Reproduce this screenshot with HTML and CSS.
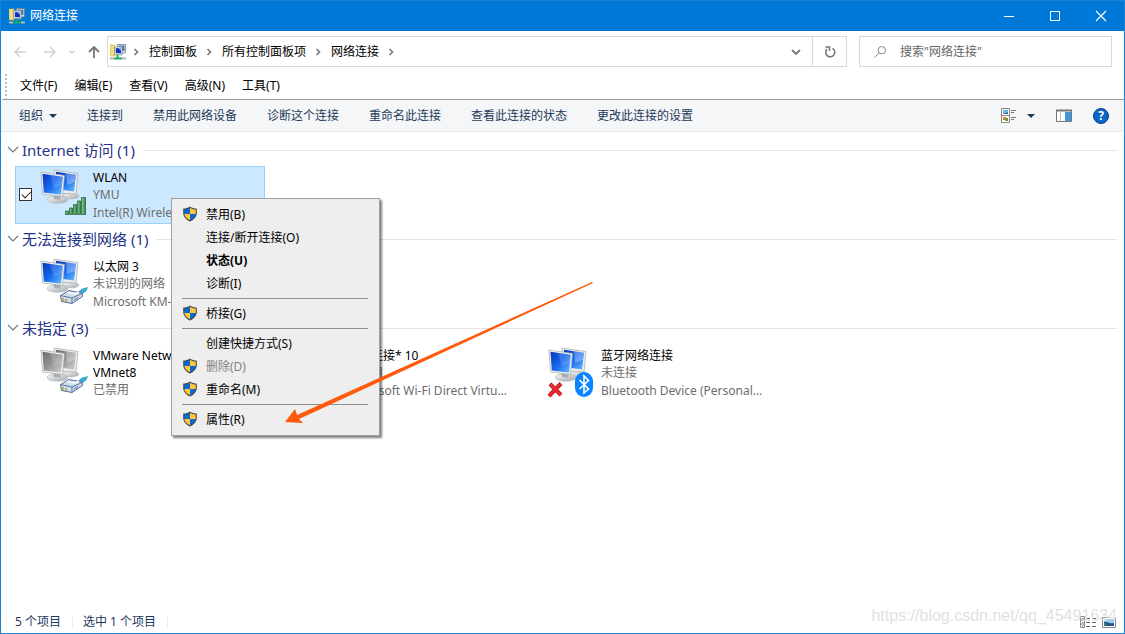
FILE: index.html
```html
<!DOCTYPE html>
<html lang="zh-CN">
<head>
<meta charset="utf-8">
<title>网络连接</title>
<link rel="stylesheet" href="styles.css">
</head>
<body>
<svg class="defs" aria-hidden="true">
  <defs>
    <linearGradient id="blue" x1="0" y1="0" x2="1" y2="1"><stop offset="0" stop-color="#0836b8"/><stop offset=".5" stop-color="#1668ee"/><stop offset="1" stop-color="#6cc0ff"/></linearGradient>
    <linearGradient id="grey" x1="0" y1="0" x2="1" y2="1"><stop offset="0" stop-color="#6b6b6b"/><stop offset=".5" stop-color="#969696"/><stop offset="1" stop-color="#d4d4d4"/></linearGradient>
    <linearGradient id="stand" x1="0" y1="0" x2="1" y2="1"><stop offset="0" stop-color="#fafafa"/><stop offset="1" stop-color="#a4a8ac"/></linearGradient>
    <linearGradient id="green" x1="0" y1="0" x2="1" y2="0"><stop offset="0" stop-color="#8fcf9c"/><stop offset="1" stop-color="#2f8049"/></linearGradient>
    <symbol id="screens" viewBox="0 0 50 52">
      <ellipse cx="31" cy="28" rx="8" ry="3" fill="url(#stand)" stroke="#bbb" stroke-width=".5"/>
      <path d="M14 2 38 5.500 36 26 15 25Z" fill="#ececec" stroke="#a5a9ad" stroke-width=".7"/>
      <path d="M16 3.800 36 6.800 34 23.500 16 21Z" fill="var(--screen)"/>
      <path d="M26 5.300 36 6.800 35 14 27 17Z" fill="#fff" opacity=".3"/>
      <ellipse cx="17.500" cy="31.500" rx="10.500" ry="3.800" fill="url(#stand)" stroke="#b4b8bc" stroke-width=".6"/>
      <path d="M13 26 21 27.500 20 31.500 14 31Z" fill="#a9adb2"/>
      <path d="M1 4 24.500 7.500 22.500 28.500 2.500 26Z" fill="#f3f3f3" stroke="#a5a9ad" stroke-width=".7"/>
      <path d="M2.500 5.700 22.800 8.800 21 26.800 3.800 24.500Z" fill="var(--screen)"/>
      <path d="M10 6.900 22.800 8.800 22 17 14 20Z" fill="#fff" opacity=".16"/>
    </symbol>
    <symbol id="cable" viewBox="0 0 50 52">
      <path d="M37 36 42 32 47.500 30.500 46 34 41 38Z" fill="#35a9d8" stroke="#2388b4" stroke-width=".5"/>
      <path d="M20.500 38.500 29 33.500 42 36 42.500 39.500 32 46.500 21.500 44.500Z" fill="#cfdcec" stroke="#566f9b"/>
      <path d="M20.500 38.500 32 41 42 36.500M32 41V46.500" fill="none" stroke="#5d759f"/>
      <path d="M27 35.500 35 37 39 34.800" fill="none" stroke="#f8fbff" stroke-width="1.500"/>
      <path d="M23 41V44M26 42V45" stroke="#b5a537" stroke-width="1.500"/><path d="M34 42V44L38 42V39.500Z" fill="#8ca3c4"/>
    </symbol>
    <symbol id="shield" viewBox="0 0 16 16">
      <path d="M8 .5C6 2 3.500 2.500 1.200 2.500V7.500C1.500 11 4.500 14 8 15.600 11.500 14 14.500 11 14.800 7.500V2.500C12.500 2.500 10 2 8 .5Z" fill="#454b52"/>
      <path d="M8 1.800V8H2.300V3.600C4.500 3.500 6.500 2.900 8 1.800Z" fill="#0b68d0"/><path d="M8 1.800V8H13.700V3.600C11.500 3.500 9.500 2.900 8 1.800Z" fill="#ffc83b"/>
      <path d="M2.300 8H8V14.300C5 12.900 2.700 10.800 2.300 8Z" fill="#ffc83b"/><path d="M13.700 8H8V14.300C11 12.900 13.300 10.800 13.700 8Z" fill="#0b68d0"/>
    </symbol>
    <symbol id="network" viewBox="0 0 16 16">
      <path d="M0 1H5V12H0Z" fill="#f4dd7a" stroke="#cfaf48" stroke-width=".6"/>
      <path d="M7 .5H15.500V8.500L12 9.500Z" fill="#dce3ea" stroke="#687684" stroke-width=".7"/><path d="M9 1.500H14.500V7H9Z" fill="#547bb0"/>
      <path d="M4.500 3 12 2.500V11L4.500 10.500Z" fill="#eceff2" stroke="#78838d" stroke-width=".7"/><path d="M5.800 4.200 11 3.800V9.500L5.800 9Z" fill="#1235b8"/><path d="M8 4 11 3.800V7Z" fill="#7da8ec"/>
      <path d="M7.500 10.500V14M4 14.500H12" stroke="#1cab62" stroke-width="2"/><path d="M0 14.500H4M12 14.500H16" stroke="#aeb8c0" stroke-width="2"/>
    </symbol>
    <symbol id="crumb" viewBox="0 0 6 8"><path d="M1.500 1 4.500 4 1.500 7" fill="none" stroke="#777" stroke-width="1.600"/></symbol>
    <symbol id="fold" viewBox="0 0 12 8"><path d="M1 1 6 6 11 1" fill="none" stroke="#777" stroke-width="1.200"/></symbol>
  </defs>
</svg>
<div class="window">
  <header class="titlebar">
    <svg class="i16"><use href="#network"/></svg>
    <h1 class="title">网络连接</h1>
    <button class="winbtn" aria-label="最小化"><svg class="i10" viewBox="0 0 10 10"><path d="M0 5.500H10" stroke="#fff"/></svg></button>
    <button class="winbtn" aria-label="最大化"><svg class="i10" viewBox="0 0 10 10"><path d="M.5 .5H9.500V9.500H.5Z" fill="none" stroke="#fff"/></svg></button>
    <button class="winbtn" aria-label="关闭"><svg class="i10" viewBox="0 0 10 10"><path d="M0 0 10 10M10 0 0 10" stroke="#fff" stroke-width="1.200"/></svg></button>
  </header>

  <div class="navbar">
    <div class="navbuttons">
      <button class="plain" aria-label="后退"><svg class="i12" viewBox="0 0 12 12"><path d="M12 6H1M6 1 1 6 6 11" fill="none" stroke="#d2d2d2" stroke-width="1.500"/></svg></button>
      <button class="plain" aria-label="前进"><svg class="i12" viewBox="0 0 12 12"><path d="M0 6H11M6 1 11 6 6 11" fill="none" stroke="#d2d2d2" stroke-width="1.500"/></svg></button>
      <button class="plain recent" aria-label="最近位置"><svg class="i6" viewBox="0 0 6 6"><path d="M.5 1.500 3 4 5.500 1.500" fill="none" stroke="#d0d0d0" stroke-width="1.400"/></svg></button>
      <button class="plain" aria-label="上移"><svg class="i12" viewBox="0 0 12 12"><path d="M6 12V1M1 6 6 1 11 6" fill="none" stroke="#777" stroke-width="1.800"/></svg></button>
    </div>
    <nav class="address" aria-label="地址">
      <svg class="i16"><use href="#network"/></svg>
      <svg class="crumb"><use href="#crumb"/></svg><a href="#">控制面板</a>
      <svg class="crumb"><use href="#crumb"/></svg><a href="#">所有控制面板项</a>
      <svg class="crumb"><use href="#crumb"/></svg><a href="#">网络连接</a>
      <svg class="crumb"><use href="#crumb"/></svg>
      <button class="plain history" aria-label="历史记录"><svg class="i10" viewBox="0 0 10 10"><path d="M1 3 5 7 9 3" fill="none" stroke="#777" stroke-width="1.800"/></svg></button>
      <button class="plain refresh" aria-label="刷新"><svg class="i12" viewBox="0 0 12 12"><path d="M8.500 2.400A4.500 4.500 0 1 1 3 3.200" fill="none" stroke="#777" stroke-width="1.600"/><path d="M1.500 1H5.500V5" fill="none" stroke="#777" stroke-width="1.500"/></svg></button>
    </nav>
    <label class="search">
      <svg class="i12" viewBox="0 0 12 12"><circle cx="7.800" cy="4.200" r="3.700" fill="none" stroke="#888"/><path d="M5.200 6.800 .5 11.500" stroke="#888"/></svg>
      <input type="search" aria-label="搜索" placeholder="搜索&quot;网络连接&quot;">
    </label>
  </div>

  <div class="menubar" role="menubar">
    <button class="plain">文件(F)</button><button class="plain">编辑(E)</button><button class="plain">查看(V)</button><button class="plain">高级(N)</button><button class="plain">工具(T)</button>
  </div>

  <div class="toolbar">
    <button class="plain organize">组织 <svg class="caret" viewBox="0 0 8 4"><path d="M0 0H8L4 4Z" fill="#1e3955"/></svg></button>
    <button class="plain">连接到</button><button class="plain">禁用此网络设备</button><button class="plain">诊断这个连接</button><button class="plain">重命名此连接</button><button class="plain">查看此连接的状态</button><button class="plain">更改此连接的设置</button>
    <div class="views">
      <button class="plain viewmode" aria-label="更改视图">
        <svg class="i16" viewBox="0 0 16 16"><path d="M.5 .5H8.500V14.500H.5ZM.5 7.500H8.500" fill="#fff" stroke="#888"/><path d="M2 2H7V4L2 6Z" fill="#6db6e8"/><path d="M2 6 7 4V6Z" fill="#2c5a94"/><path d="M2 9H5V12H2Z" fill="#e08236"/><path d="M5 10H7V13H4Z" fill="#4f9e38"/><path d="M10 2.500H15M10 4.500H13M10 9.500H15M10 11.500H13" stroke="#777"/></svg>
        <svg class="caret" viewBox="0 0 8 4"><path d="M0 0H8L4 4Z" fill="#1e3955"/></svg>
      </button>
      <button class="plain" aria-label="预览窗格"><svg class="i16" viewBox="0 0 16 16"><path d="M.5 2.500H15.500V13.500H.5Z" fill="#fff" stroke="#777"/><path d="M0 2.500H16" stroke="#777" stroke-width="2"/><path d="M4.500 3V13" stroke="#bbb"/><path d="M9 4H15V13H9Z" fill="#3d95e0"/></svg></button>
      <button class="plain help" aria-label="帮助">?</button>
    </div>
  </div>

  <main class="content">
    <section class="group">
      <h2 class="heading"><svg class="fold"><use href="#fold"/></svg>Internet 访问 (1)</h2>
      <div class="tiles">
        <article class="tile selected">
          <input class="check" type="checkbox" checked aria-label="选择 WLAN">
          <svg class="device" viewBox="0 0 50 52"><use href="#screens"/><g fill="url(#green)" stroke="#27683b" stroke-width=".8"><path d="M25.500 43H28.500V46.500H25.500Z"/><path d="M29.500 40H32.500V46.500H29.500Z"/><path d="M33.500 36.500H36.500V46.500H33.500Z"/><path d="M37.500 33H40.500V46.500H37.500Z"/><path d="M41.500 29.500H45.500V46.500H41.500Z"/></g></svg>
          <div class="info"><h3>WLAN</h3><p>YMU</p><p>Intel(R) Wireless-AC 9560 160MHz</p></div>
        </article>
      </div>
    </section>
    <section class="group">
      <h2 class="heading"><svg class="fold"><use href="#fold"/></svg>无法连接到网络 (1)</h2>
      <div class="tiles">
        <article class="tile">
          <svg class="device" viewBox="0 0 50 52"><use href="#screens"/><use href="#cable"/></svg>
          <div class="info"><h3>以太网 3</h3><p>未识别的网络</p><p>Microsoft KM-TEST 环回适配器</p></div>
        </article>
      </div>
    </section>
    <section class="group">
      <h2 class="heading"><svg class="fold"><use href="#fold"/></svg>未指定 (3)</h2>
      <div class="tiles">
        <article class="tile disabled">
          <svg class="device" viewBox="0 0 50 52"><use href="#screens"/><use href="#cable"/></svg>
          <div class="info"><h3>VMware Network Adapter VMnet8</h3><p>已禁用</p></div>
        </article>
        <article class="tile disabled">
          <svg class="device" viewBox="0 0 50 52"><use href="#screens"/></svg>
          <div class="info"><h3>本地连接* 10</h3><p>已禁用</p><p>Microsoft Wi-Fi Direct Virtual Adapter</p></div>
        </article>
        <article class="tile">
          <svg class="device" viewBox="0 0 50 52"><use href="#screens"/><path d="M2 38 13 49M13 37.500 1 50" stroke="#c51520" stroke-width="4"/><path d="M2 38 13 49M13 37.500 1 50" stroke="#ee3038" stroke-width="1.800"/><rect x="27" y="26" width="18" height="25" rx="9" fill="#0a84ff"/><path d="M31.500 34 40.500 43 36 47V30L40.500 34.500 31.500 43" fill="none" stroke="#fff" stroke-width="1.600"/></svg>
          <div class="info"><h3>蓝牙网络连接</h3><p>未连接</p><p>Bluetooth Device (Personal Area Network)</p></div>
        </article>
      </div>
    </section>
  </main>

  <footer class="status">
    <span>5 个项目</span><span>选中 1 个项目</span>
    <div class="statusviews">
      <button class="plain" aria-label="详细信息"><svg class="i16" viewBox="0 0 16 16"><path d="M.5 2.500H4.500V13.500H.5ZM.5 6H4.500M.5 10H4.500" fill="#fff" stroke="#888"/><path d="M2 4.500H3.500M2 8.500H3.500" stroke="#4c88bb"/><path d="M2 12H3.500" stroke="#d33"/><path d="M6 4.500H10M12 4.500H16M6 8.500H10M12 8.500H16M6 12.500H10M12 12.500H16" stroke="#666"/></svg></button>
      <button class="plain" aria-label="大图标"><svg class="i16" viewBox="0 0 16 16"><path d="M1.500 3.500H14.500V13.500H1.500Z" fill="#fff" stroke="#888"/><path d="M3 5H13V12H3Z" fill="#9bd0f2"/><path d="M3 8C6 7 8 10 13 9V12H3Z" fill="#24578f"/><path d="M3 9 6 10 3 12Z" fill="#4b8b52"/></svg></button>
    </div>
  </footer>

  <div class="watermark">https://blog.csdn.net/qq_45491634</div>

  <div class="context" role="menu">
    <button class="item" role="menuitem"><svg class="i16"><use href="#shield"/></svg>禁用(B)</button>
    <button class="item" role="menuitem">连接/断开连接(O)</button>
    <button class="item strong" role="menuitem">状态(U)</button>
    <button class="item" role="menuitem">诊断(I)</button>
    <hr>
    <button class="item" role="menuitem"><svg class="i16"><use href="#shield"/></svg>桥接(G)</button>
    <hr>
    <button class="item" role="menuitem">创建快捷方式(S)</button>
    <button class="item" role="menuitem" disabled><svg class="i16"><use href="#shield"/></svg>删除(D)</button>
    <button class="item" role="menuitem"><svg class="i16"><use href="#shield"/></svg>重命名(M)</button>
    <hr>
    <button class="item" role="menuitem"><svg class="i16"><use href="#shield"/></svg>属性(R)</button>
  </div>
  <svg class="arrow" viewBox="0 0 310 142" aria-hidden="true"><path d="M307 0 308 1 14 137 18 141 0 140 10 127 12 133Z" fill="#ff5a0a"/></svg>
</div>
</body>
</html>
```
FILE: styles.css
```css
* { box-sizing: border-box; }
body { margin: 0; font: 12px/18px "Noto Sans", "Noto Sans CJK SC", sans-serif; color: #000; background: #fff; }
h1, h2, h3, p { margin: 0; font-size: 12px; font-weight: 400; }
a { color: inherit; text-decoration: none; }
button, input { font: inherit; color: inherit; }
svg { display: block; flex: none; overflow: visible; }
.defs { position: absolute; width: 0; height: 0; }

.i16 { width: 16px; height: 16px; }
.i12 { width: 12px; height: 12px; }
.i10 { width: 10px; height: 10px; }
.i6 { width: 6px; height: 6px; }
.caret { width: 8px; height: 4px; }
.plain { display: flex; align-items: center; border: 0; padding: 0; background: none; white-space: nowrap; }

.window { position: relative; display: flex; flex-direction: column; min-height: 100vh; border: 1px solid #1883d7; }

.titlebar { display: flex; align-items: center; height: 30px; padding-left: 8px; background: #0078d7; color: #fff; }
.title { flex: 1; padding-left: 5px; }
.winbtn { display: flex; align-items: center; justify-content: center; width: 46px; height: 30px; border: 0; padding: 0; background: none; }

.navbar { display: flex; align-items: center; height: 41px; padding-right: 12px; }
.navbuttons { display: flex; align-items: center; width: 106px; padding-left: 13px; gap: 18px; }
.recent { margin: 0 -5px; }
.address { display: flex; flex: 1; align-items: center; height: 31px; border: 1px solid #d9d9d9; padding-left: 2px; }
.crumb { width: 6px; height: 8px; margin: 0 10px 0 9px; }
.address .i16 + .crumb { margin-left: 7px; }
.history { margin-left: auto; padding-right: 11px; }
.refresh { justify-content: center; width: 34px; height: 29px; border-left: 1px solid #d9d9d9; }
.search { display: flex; align-items: center; width: 253px; height: 31px; margin-left: 12px; border: 1px solid #d9d9d9; padding: 0 14px; gap: 14px; }
.search input { flex: 1; min-width: 0; border: 0; padding: 0; outline: 0; background: none; }
.search input::placeholder { color: #666; opacity: 1; }

.menubar { display: flex; height: 28px; margin-left: 1px; padding-left: 18px; gap: 17px; border-bottom: 1px solid #a0a09c; background: linear-gradient(#bbb 50%, transparent 50%) 3px 2px / 2px 4px repeat-y; }

.toolbar { display: flex; height: 32px; padding: 0 15px 0 18px; gap: 30px; border-bottom: 1px solid #e8eaed; background: #f5f6f7; color: #1e395b; }
.organize { gap: 6px; }
.views { display: flex; align-items: center; gap: 21px; margin-left: auto; }
.viewmode { gap: 10px; }
.help { justify-content: center; width: 16px; height: 16px; border: 1px solid #063e80; border-radius: 50%; background: #0867c8; color: #fff; font-weight: 700; }

.content { flex: 1; padding: 4px 7px 0 6px; }
.group { padding-bottom: 1px; }
.heading { display: flex; align-items: center; height: 30px; padding-bottom: 2px; color: #1e3287; font-size: 15px; }
.heading::after { content: ""; flex: 1; height: 1px; margin-left: 8px; background: #e2e2e2; }
.fold { width: 12px; height: 8px; margin-right: 3px; }
.tiles { display: flex; flex-wrap: wrap; gap: 4px; padding-left: 8px; }
.tile { --screen: url(#blue); position: relative; display: flex; width: 250px; height: 58px; border: 1px solid transparent; padding-left: 24px; }
.selected { border-color: #99d1ff; background: #cce8ff; }
.disabled { --screen: url(#grey); }
.check { position: absolute; left: 3px; top: 21px; width: 13px; height: 13px; margin: 0; appearance: none; border: 1px solid #333; background: #fff; }
.check::after { content: ""; position: absolute; left: 2px; top: 2px; width: 8px; height: 4px; border: solid #222; border-width: 0 0 1px 1px; transform: rotate(-45deg); }
.device { width: 50px; height: 52px; margin-top: 1px; }
.info { flex: 1; min-width: 0; padding: 2px 8px 0 3px; color: #6d6d6d; }
.info h3 { color: #000; line-height: 17px; }
.info p { overflow: hidden; text-overflow: ellipsis; white-space: nowrap; }

.status { display: flex; align-items: center; height: 24px; padding: 2px 7px 0 14px; color: #1e395b; }
.status span { margin-right: 10px; border-right: 1px solid #ededed; padding-right: 11px; line-height: 12px; }
.statusviews { display: flex; gap: 5px; margin-left: auto; }
.watermark { position: absolute; right: 7px; bottom: 7px; color: #e2e2e2; font: 16px/20px "Liberation Sans", sans-serif; pointer-events: none; }

.context { position: absolute; left: 170px; top: 197px; width: 209px; border: 1px solid #a0a0a0; padding: 4px 3px; background: #eee; box-shadow: 2px 2px 2px rgba(0, 0, 0, .5); }
.item { display: flex; align-items: center; position: relative; width: 100%; height: 23px; border: 0; padding: 0 0 0 31px; background: none; text-align: left; }
.item .i16 { position: absolute; left: 7px; top: 3px; }
.item:disabled { color: #838383; }
.strong { font-weight: 700; }
.context hr { height: 1px; margin: 3px 8px 3px 7px; border: 0; background: #909090; }
.arrow { position: absolute; left: 284px; top: 281px; width: 310px; height: 142px; pointer-events: none; }
```
